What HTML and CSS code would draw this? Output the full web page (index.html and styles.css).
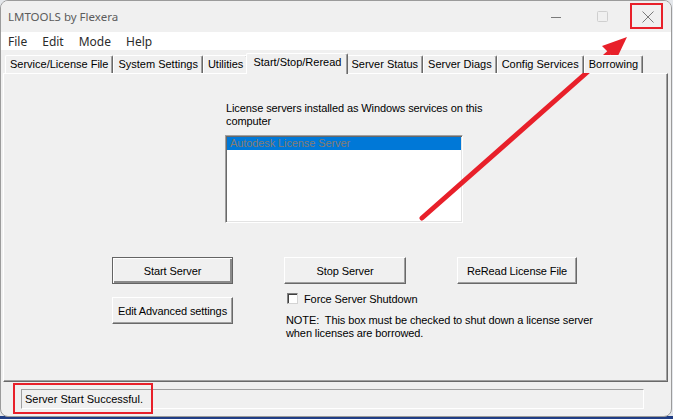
FILE: index.html
```html
<!DOCTYPE html>
<html lang="en">

<head>
    <meta charset="UTF-8">
    <title>LMTOOLS by Flexera</title>
    <link rel="stylesheet" href="styles.css">
</head>

<body>

    <div class="desktop">

        <div class="window">
            <div class="titlebar">
                <span class="title">LMTOOLS by Flexera</span>
                <div class="caption">
                    <span class="cap-btn">
                        <svg width="10" height="10" viewBox="0 0 10 10"><path d="M0 5.5h10" stroke="#7a7a7a" stroke-width="1" /></svg>
                    </span>
                    <span class="cap-btn">
                        <svg width="11" height="11" viewBox="0 0 11 11"><rect x="0.5" y="0.5" width="10" height="10" rx="1" fill="none" stroke="#cfcfcf" /></svg>
                    </span>
                    <span class="cap-btn">
                        <svg width="12" height="12" viewBox="0 0 12 12"><path d="M0.5 0.5l11 11M11.5 0.5l-11 11" stroke="#7a7a7a" stroke-width="1" /></svg>
                    </span>
                </div>
            </div>

            <div class="menubar">
                <span class="menu-item">File</span>
                <span class="menu-item">Edit</span>
                <span class="menu-item">Mode</span>
                <span class="menu-item">Help</span>
            </div>

            <div class="client">
                <div class="tabs">
                    <div class="tab">Service/License File</div>
                    <div class="tab">System Settings</div>
                    <div class="tab">Utilities</div>
                    <div class="tab active">Start/Stop/Reread</div>
                    <div class="tab">Server Status</div>
                    <div class="tab">Server Diags</div>
                    <div class="tab">Config Services</div>
                    <div class="tab">Borrowing</div>
                </div>

                <div class="panel">
                    <div class="services">
                        <p class="services-label">License servers installed as Windows services on this<br>computer</p>
                        <div class="listbox">
                            <div class="list-item selected">Autodesk License Server</div>
                        </div>
                    </div>

                    <div class="controls">
                        <button class="btn default">Start Server</button>
                        <button class="btn">Stop Server</button>
                        <button class="btn">ReRead License File</button>
                        <button class="btn edit">Edit Advanced settings</button>
                        <div class="force">
                            <div class="check"><span class="box"></span>Force Server Shutdown</div>
                            <p class="note">NOTE:&nbsp; This box must be checked to shut down a license server<br>when licenses are borrowed.</p>
                        </div>
                    </div>
                </div>

                <div class="statusbar">
                    <div class="status-field">Server Start Successful.</div>
                </div>
            </div>
        </div>

        <!-- annotations drawn over the screenshot -->
        <div class="callout callout-close"></div>
        <div class="callout callout-status"></div>
        <svg class="arrow" width="673" height="419" viewBox="0 0 673 419">
            <path d="M422 218L610 52" stroke="#e8202a" stroke-width="5" stroke-linecap="round" />
            <polygon points="627,37 602,46 616,60" fill="#e8202a" />
        </svg>

    </div>

</body>

</html>
```

FILE: styles.css
```css
body {
    margin: 0;
    background-color: #dfe3e8;
}

.desktop {
    position: relative;
    width: 673px;
    height: 419px;
    overflow: hidden;
    background: linear-gradient(to bottom, #e4e7eb 0, #e4e7eb 416px, #1f3d84 416px);
}

.window {
    box-sizing: border-box;
    width: 672px;
    height: 417px;
    border: 1px solid #9b9b9b;
    border-radius: 8px;
    background-color: #f0f0f0;
    overflow: hidden;
    display: flex;
    flex-direction: column;
}

.titlebar {
    height: 31px;
    display: flex;
    align-items: center;
    background-color: #f0f0f0;
    font-family: "Noto Sans", sans-serif;
    font-size: 11.5px;
    color: #5c5c5c;
    flex-shrink: 0;
}

.title {
    padding-left: 7px;
    margin-top: -1px;
}

.caption {
    margin-left: auto;
    display: flex;
    height: 100%;
}

.cap-btn {
    width: 46px;
    display: flex;
    justify-content: center;
    align-items: center;
}

.menubar {
    height: 18px;
    background-color: #ffffff;
    display: flex;
    align-items: center;
    gap: 15px;
    padding-left: 7px;
    font-family: "Noto Sans", sans-serif;
    font-size: 12px;
    color: #2b2b2b;
    flex-shrink: 0;
}

.client {
    flex: 1;
    padding-top: 3px;
    font-family: "Liberation Sans", Arial, sans-serif;
    font-size: 11px;
    color: #000000;
}

/* tab strip */
.tabs {
    height: 20px;
    display: flex;
    align-items: flex-end;
    padding-left: 4px;
    position: relative;
    z-index: 1;
}

.tab {
    box-sizing: border-box;
    height: 18px;
    line-height: 16px;
    padding: 0 4px;
    border-top: 1px solid #ffffff;
    border-left: 1px solid #ffffff;
    border-right: 1px solid #696969;
    box-shadow: inset -1px 0 #a0a0a0;
    border-radius: 2px 2px 0 0;
    white-space: nowrap;
    background-color: #f0f0f0;
}

.tab.active {
    height: 21px;
    margin: 0 -2px -1px -2px;
    padding: 0 6px;
    line-height: 17px;
    position: relative;
}

/* page of the tab control */
.panel {
    box-sizing: border-box;
    height: 309px;
    margin: 0 3px 0 2px;
    border-top: 1px solid #ffffff;
    border-left: 1px solid #ffffff;
    border-right: 1px solid #696969;
    border-bottom: 1px solid #696969;
    box-shadow: inset -1px -1px #a0a0a0;
    letter-spacing: -0.1px;
}

.services {
    margin: 28px 0 0 221px;
}

.services-label {
    margin: 0;
    padding-left: 1px;
    line-height: 13px;
    white-space: nowrap;
}

.listbox {
    box-sizing: border-box;
    width: 238px;
    height: 88px;
    margin-top: 7px;
    background-color: #ffffff;
    border-top: 1px solid #a0a0a0;
    border-left: 1px solid #a0a0a0;
    border-right: 1px solid #ffffff;
    border-bottom: 1px solid #ffffff;
    box-shadow: inset 1px 1px #696969, inset -1px -1px #e3e3e3;
    padding: 1px 1px 0 1px;
}

.list-item {
    height: 13px;
    line-height: 13px;
    padding-left: 3px;
    white-space: nowrap;
}

.list-item.selected {
    background-color: #0078d7;
    color: #857c72;
}

.controls {
    margin: 34px 0 0 108px;
    display: grid;
    grid-template-columns: 121px 122px 120px;
    column-gap: 51px;
    align-items: start;
}

.btn {
    box-sizing: border-box;
    height: 27px;
    margin: 0;
    padding: 0;
    font-family: "Liberation Sans", Arial, sans-serif;
    font-size: 11px;
    letter-spacing: -0.1px;
    color: #000000;
    background-color: #f0f0f0;
    border-top: 1px solid #ffffff;
    border-left: 1px solid #ffffff;
    border-right: 1px solid #696969;
    border-bottom: 1px solid #696969;
    box-shadow: inset -1px -1px #a0a0a0;
}

.btn.default {
    border: 1px solid #646464;
    box-shadow: inset 1px 1px #ffffff, inset -2px -2px #8a8a8a;
}

.btn.edit {
    margin-top: 13px;
}

.force {
    grid-column: 2 / 4;
    margin-top: 9px;
}

.check {
    display: flex;
    align-items: center;
    height: 11px;
    padding-left: 3px;
    white-space: nowrap;
}

.box {
    box-sizing: border-box;
    width: 11px;
    height: 11px;
    margin-right: 6px;
    background-color: #ffffff;
    border-top: 1px solid #808080;
    border-left: 1px solid #808080;
    border-right: 1px solid #d4d4d4;
    border-bottom: 1px solid #d4d4d4;
    box-shadow: inset 1px 1px #404040;
}

.note {
    margin: 10px 0 0 0;
    padding-left: 2px;
    line-height: 13px;
    white-space: nowrap;
}

/* status bar */
.statusbar {
    padding: 7px 0 0 20px;
}

.status-field {
    box-sizing: border-box;
    width: 623px;
    height: 20px;
    line-height: 18px;
    padding-left: 3px;
    border-top: 1px solid #a0a0a0;
    border-left: 1px solid #a0a0a0;
    border-right: 1px solid #ffffff;
    border-bottom: 1px solid #ffffff;
}

/* red annotations */
.callout {
    position: absolute;
    box-sizing: border-box;
    border: 2px solid #e8202a;
}

.callout-close {
    left: 630px;
    top: 3px;
    width: 33px;
    height: 26px;
}

.callout-status {
    left: 13px;
    top: 383px;
    width: 140px;
    height: 31px;
}

.arrow {
    position: absolute;
    left: 0;
    top: 0;
}
```
